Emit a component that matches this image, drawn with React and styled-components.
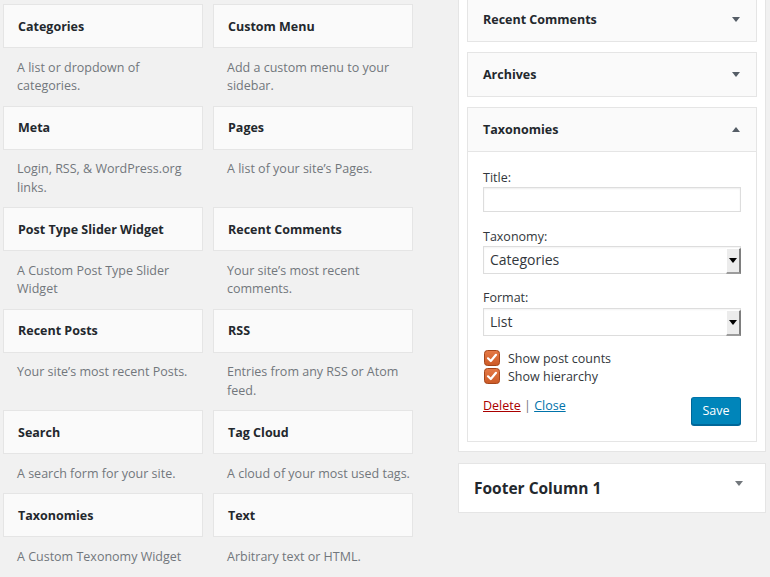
import React from "react";
import styled, { createGlobalStyle } from "styled-components";

const Global = createGlobalStyle`
  html, body { margin: 0; padding: 0; background: #f1f1f1; overflow: hidden; }
  body { font-family: "Open Sans", "Noto Sans", sans-serif; color: #23282d; }
  * { box-sizing: border-box; }
`;

const Page = styled.div`
  display: flex;
  align-items: flex-start;
  width: 770px;
  height: 577px;
  padding: 4px 0 0 3px;
`;

const WidgetGrid = styled.div`
  display: grid;
  grid-template-columns: 200px 200px;
  column-gap: 10px;
  align-items: start;
`;

const Item = styled.div``;

const ItemTop = styled.div`
  height: 44px;
  background: #fafafa;
  border: 1px solid #e5e5e5;
  display: flex;
  align-items: center;
  padding: 0 14px;
  font-weight: 700;
  font-size: 12.5px;
  color: #23282d;
`;

const ItemDesc = styled.p`
  margin: 0;
  padding: 10.5px 0 10px 14px;
  font-size: 12.5px;
  line-height: 18.5px;
  color: #72777c;
`;

const RightCol = styled.div`
  margin-left: 45px;
  margin-top: -16px;
  width: 308px;
  display: flex;
  flex-direction: column;
  gap: 11px;
`;

const Sidebar = styled.div`
  background: #fff;
  border: 1px solid #e5e5e5;
  padding: 8px 8px 9px;
  display: flex;
  flex-direction: column;
  gap: 10px;
`;

const Widget = styled.div`
  border: 1px solid #e5e5e5;
  background: #fafafa;
`;

const WidgetHeader = styled.div`
  height: 43px;
  display: flex;
  align-items: center;
  justify-content: space-between;
  padding: 0 16px 0 15px;
  font-weight: 700;
  font-size: 12.5px;
  color: #23282d;
`;

const WidgetBody = styled.div`
  background: #fff;
  border-top: 1px solid #e5e5e5;
  padding: 17px 15px 16px;
`;

const Field = styled.div`
  margin-bottom: ${(p) => p.$mb}px;
`;

const Label = styled.div`
  font-size: 12.5px;
  line-height: 18px;
  color: #32373c;
  margin-bottom: ${(p) => p.$gap || 0}px;
`;

const TextInput = styled.div`
  height: 25px;
  border: 1px solid #ddd;
  background: #fff;
  box-shadow: inset 0 1px 2px rgba(0, 0, 0, 0.07);
`;

const Select = styled.div`
  height: 28px;
  border: 1px solid #ddd;
  background: #fff;
  display: flex;
  align-items: stretch;
  box-shadow: inset 0 1px 2px rgba(0, 0, 0, 0.05);
`;

const SelectValue = styled.span`
  flex: 1;
  display: flex;
  align-items: center;
  padding: 0 0 1px 6px;
  font-size: 14px;
  color: #32373c;
`;

const DropButton = styled.span`
  width: 15px;
  margin: 1px -1px -1px 0;
  background: #ececec;
  border-top: 1px solid #fff;
  border-left: 1px solid #fff;
  border-right: 2px solid #7e7e7e;
  border-bottom: 2px solid #9c9c9c;
  display: flex;
  align-items: center;
  justify-content: center;
`;

const CheckRow = styled.label`
  display: flex;
  align-items: center;
  height: 18px;
  padding-left: 1px;
  gap: 8px;
  font-size: 12.5px;
  color: #32373c;
`;

const Checks = styled.div`
  margin-top: 13px;
`;

const Actions = styled.div`
  display: flex;
  justify-content: space-between;
  align-items: flex-start;
  margin-top: 11px;
`;

const Links = styled.div`
  margin-top: 1px;
  font-size: 12.5px;
  line-height: 18px;
  color: #72777c;
`;

const Link = styled.a`
  color: ${(p) => (p.$danger ? "#a00" : "#0073aa")};
  text-decoration: underline;
  cursor: pointer;
`;

const SaveButton = styled.button`
  margin-top: 1px;
  width: 50px;
  height: 28px;
  background: #0085ba;
  border: 1px solid;
  border-color: #0073aa #006799 #006799;
  border-radius: 3px;
  box-shadow: 0 1px 0 #006799;
  color: #fff;
  font-family: inherit;
  font-size: 12.5px;
  padding: 0 0 1px;
`;

const FooterBox = styled.div`
  height: 50px;
  background: #fff;
  border: 1px solid #e5e5e5;
  display: flex;
  align-items: center;
  justify-content: space-between;
  padding: 0 22px 0 15px;
  font-weight: 700;
  font-size: 15.5px;
  color: #23282d;
`;

const ArrowSvg = styled.svg`
  display: block;
  flex: none;
  margin-bottom: ${(p) => p.$lift || 0}px;
`;

const Arrow = ({ up, color = "#555d66", lift }) => (
  <ArrowSvg width="8" height="5" viewBox="0 0 8 5" $lift={lift}>
    <path d={up ? "M0 5L4 0L8 5Z" : "M0 0L8 0L4 5Z"} fill={color} />
  </ArrowSvg>
);

const Checkbox = () => (
  <svg width="16" height="16" viewBox="0 0 16 16" style={{ flex: "none" }}>
    <defs>
      <linearGradient id="cbg" x1="0" y1="0" x2="0" y2="1">
        <stop offset="0" stopColor="#e57a47" />
        <stop offset="1" stopColor="#cc5a26" />
      </linearGradient>
    </defs>
    <rect x="0.5" y="0.5" width="15" height="15" rx="3" fill="url(#cbg)" stroke="#a5461b" />
    <path d="M4 8.3L6.8 11L12 4.8" fill="none" stroke="#fff" strokeWidth="2.2" strokeLinecap="round" strokeLinejoin="round" />
  </svg>
);

const items = [
  ["Categories", "A list or dropdown of categories."],
  ["Custom Menu", "Add a custom menu to your sidebar."],
  ["Meta", "Login, RSS, & WordPress.org links."],
  ["Pages", "A list of your site’s Pages."],
  ["Post Type Slider Widget", "A Custom Post Type Slider Widget"],
  ["Recent Comments", "Your site’s most recent comments."],
  ["Recent Posts", "Your site’s most recent Posts."],
  ["RSS", "Entries from any RSS or Atom feed."],
  ["Search", "A search form for your site."],
  ["Tag Cloud", "A cloud of your most used tags."],
  ["Taxonomies", "A Custom Texonomy Widget"],
  ["Text", "Arbitrary text or HTML."],
];

export default function App() {
  return (
    <>
      <Global />
      <Page>
        <WidgetGrid>
          {items.map(([t, d]) => (
            <Item key={t}>
              <ItemTop>{t}</ItemTop>
              <ItemDesc>{d}</ItemDesc>
            </Item>
          ))}
        </WidgetGrid>
        <RightCol>
          <Sidebar>
            <Widget>
              <WidgetHeader>
                Recent Comments
                <Arrow />
              </WidgetHeader>
            </Widget>
            <Widget>
              <WidgetHeader>
                Archives
                <Arrow />
              </WidgetHeader>
            </Widget>
            <Widget>
              <WidgetHeader>
                Taxonomies
                <Arrow up />
              </WidgetHeader>
              <WidgetBody>
                <Field $mb={16}>
                  <Label>Title:</Label>
                  <TextInput />
                </Field>
                <Field $mb={15}>
                  <Label>Taxonomy:</Label>
                  <Select>
                    <SelectValue>Categories</SelectValue>
                    <DropButton>
                      <Arrow color="#000" />
                    </DropButton>
                  </Select>
                </Field>
                <Field $mb={0}>
                  <Label $gap={1}>Format:</Label>
                  <Select>
                    <SelectValue>List</SelectValue>
                    <DropButton>
                      <Arrow color="#000" />
                    </DropButton>
                  </Select>
                </Field>
                <Checks>
                  <CheckRow>
                    <Checkbox />
                    Show post counts
                  </CheckRow>
                  <CheckRow>
                    <Checkbox />
                    Show hierarchy
                  </CheckRow>
                </Checks>
                <Actions>
                  <Links>
                    <Link $danger>Delete</Link> | <Link>Close</Link>
                  </Links>
                  <SaveButton>Save</SaveButton>
                </Actions>
              </WidgetBody>
            </Widget>
          </Sidebar>
          <FooterBox>
            Footer Column 1
            <Arrow color="#72777c" lift={10} />
          </FooterBox>
        </RightCol>
      </Page>
    </>
  );
}
